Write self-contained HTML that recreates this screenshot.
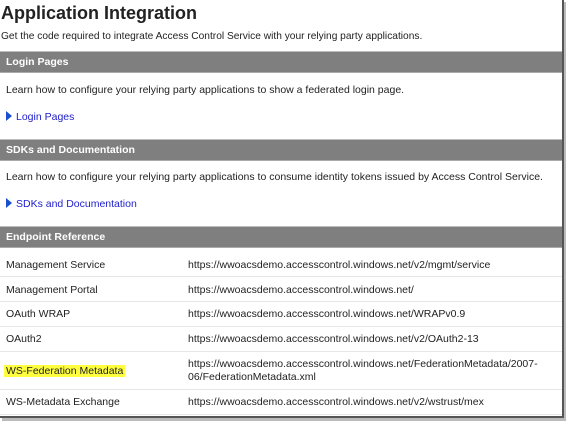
<!DOCTYPE html>
<html><head><style>
body{margin:0;width:566px;height:421px;background:#fff;position:relative;overflow:hidden;font-family:"Liberation Sans",sans-serif;color:#222}
.a{position:absolute;white-space:nowrap;font-size:10.5px}
.h{position:absolute;left:0;width:562px;height:20px;background:#7f7f7f;border-top:1px solid #bdbdbd;border-bottom:1px solid #aaa;color:#fff;font-weight:bold;font-size:10.5px;line-height:20px;text-indent:6px}
.l{position:absolute;left:0;width:562px;height:1px;background:#e6e6e6}
.lk{color:#2020d0}
.tri{display:inline-block;width:0;height:0;border-top:5px solid transparent;border-bottom:5px solid transparent;border-left:6px solid #1a4fd0;margin-right:4px;vertical-align:-1px}
</style></head><body>
<div class="a" style="left:1px;top:3px;font-size:18px;font-weight:bold;color:#222">Application Integration</div>
<div class="a" style="left:1px;top:31px;font-size:10.2px">Get the code required to integrate Access Control Service with your relying party applications.</div>
<div class="h" style="top:51px">Login Pages</div>
<div class="a" style="left:6px;top:84px">Learn how to configure your relying party applications to show a federated login page.</div>
<div class="a lk" style="left:6px;top:111px"><span class="tri"></span>Login Pages</div>
<div class="h" style="top:139px">SDKs and Documentation</div>
<div class="a" style="left:6px;top:171px">Learn how to configure your relying party applications to consume identity tokens issued by Access Control Service.</div>
<div class="a lk" style="left:6px;top:198px"><span class="tri"></span>SDKs and Documentation</div>
<div class="h" style="top:226px">Endpoint Reference</div>
<div class="a" style="left:6px;top:259px">Management Service</div><div class="a" style="left:188px;top:259px">https://wwoacsdemo.accesscontrol.windows.net/v2/mgmt/service</div>
<div class="l" style="top:276px"></div>
<div class="a" style="left:6px;top:284px">Management Portal</div><div class="a" style="left:188px;top:284px">https://wwoacsdemo.accesscontrol.windows.net/</div>
<div class="l" style="top:301px"></div>
<div class="a" style="left:6px;top:308px">OAuth WRAP</div><div class="a" style="left:188px;top:308px">https://wwoacsdemo.accesscontrol.windows.net/WRAPv0.9</div>
<div class="l" style="top:326px"></div>
<div class="a" style="left:6px;top:333px">OAuth2</div><div class="a" style="left:188px;top:333px">https://wwoacsdemo.accesscontrol.windows.net/v2/OAuth2-13</div>
<div class="l" style="top:351px"></div>
<div class="a" style="left:4px;top:365px;background:#ffff40;padding:0 2px">WS-Federation Metadata</div>
<div class="a" style="left:188px;top:358px;line-height:13px">https://wwoacsdemo.accesscontrol.windows.net/FederationMetadata/2007-<br>06/FederationMetadata.xml</div>
<div class="l" style="top:389px"></div>
<div class="a" style="left:6px;top:396px">WS-Metadata Exchange</div><div class="a" style="left:188px;top:396px">https://wwoacsdemo.accesscontrol.windows.net/v2/wstrust/mex</div>
<div class="l" style="top:414px"></div>
<div style="position:absolute;left:562px;top:0;width:2px;height:419px;background:#555"></div>
<div style="position:absolute;left:564px;top:2px;width:2px;height:419px;background:#bbb"></div>
<div style="position:absolute;left:0;top:416px;width:564px;height:2px;background:#555"></div>
<div style="position:absolute;left:2px;top:418px;width:564px;height:3px;background:#bbb"></div>
</body></html>
